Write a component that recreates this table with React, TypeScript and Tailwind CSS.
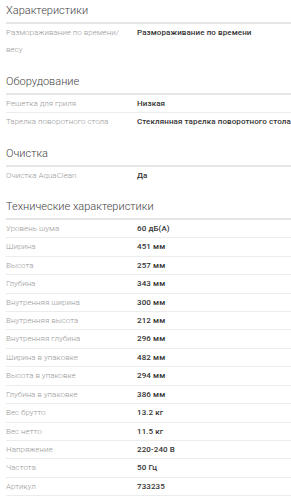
type Row = { label: string; value: string };
type Section = { title: string; rows: Row[]; lastLine?: boolean };

const sections: Section[] = [
  {
    title: "Характеристики",
    rows: [{ label: "Размораживание по времени/ весу", value: "Размораживание по времени" }],
  },
  {
    title: "Оборудование",
    rows: [
      { label: "Решетка для гриля", value: "Низкая" },
      { label: "Тарелка поворотного стола", value: "Стеклянная тарелка поворотного стола" },
    ],
  },
  {
    title: "Очистка",
    rows: [{ label: "Очистка AquaClean", value: "Да" }],
  },
  {
    title: "Технические характеристики",
    lastLine: true,
    rows: [
      { label: "Уровень шума", value: "60 дБ(A)" },
      { label: "Ширина", value: "451 мм" },
      { label: "Высота", value: "257 мм" },
      { label: "Глубина", value: "343 мм" },
      { label: "Внутренняя ширина", value: "300 мм" },
      { label: "Внутренняя высота", value: "212 мм" },
      { label: "Внутренняя глубина", value: "296 мм" },
      { label: "Ширина в упаковке", value: "482 мм" },
      { label: "Высота в упаковке", value: "294 мм" },
      { label: "Глубина в упаковке", value: "386 мм" },
      { label: "Вес брутто", value: "13.2 кг" },
      { label: "Вес нетто", value: "11.5 кг" },
      { label: "Напряжение", value: "220-240 В" },
      { label: "Частота", value: "50 Гц" },
      { label: "Артикул", value: "733235" },
    ],
  },
];

/**
 * Таблица характеристик товара
 */
export default function App() {
  return (
    <div className="min-h-screen overflow-hidden bg-white pl-[6px] pt-[4px] font-['Roboto','Liberation_Sans',Arial,sans-serif]">
      {sections.map((section, i) => (
        <section key={section.title} className={i === 0 ? "" : "mt-[16px]"}>
          {/* заголовок раздела */}
          <h2 className="border-b-2 border-[#e6e6e6] pb-[4px] text-[11px] font-light leading-[14px] text-[#444]">
            {section.title}
          </h2>

          {/* строки */}
          <dl className={section.lastLine ? "border-b border-[#ececec]" : ""}>
            {section.rows.map((row, j) => (
              <div
                key={row.label}
                className={`flex text-[8px] leading-[17.4px] ${j === 0 ? "" : "border-t border-[#ececec]"}`}
              >
                <dt className="w-[131px] shrink-0 pr-[14px] font-light text-[#999]">{row.label}</dt>
                <dd className="whitespace-nowrap font-medium tracking-[0.1px] text-[#333]">{row.value}</dd>
              </div>
            ))}
          </dl>
        </section>
      ))}
    </div>
  );
}
